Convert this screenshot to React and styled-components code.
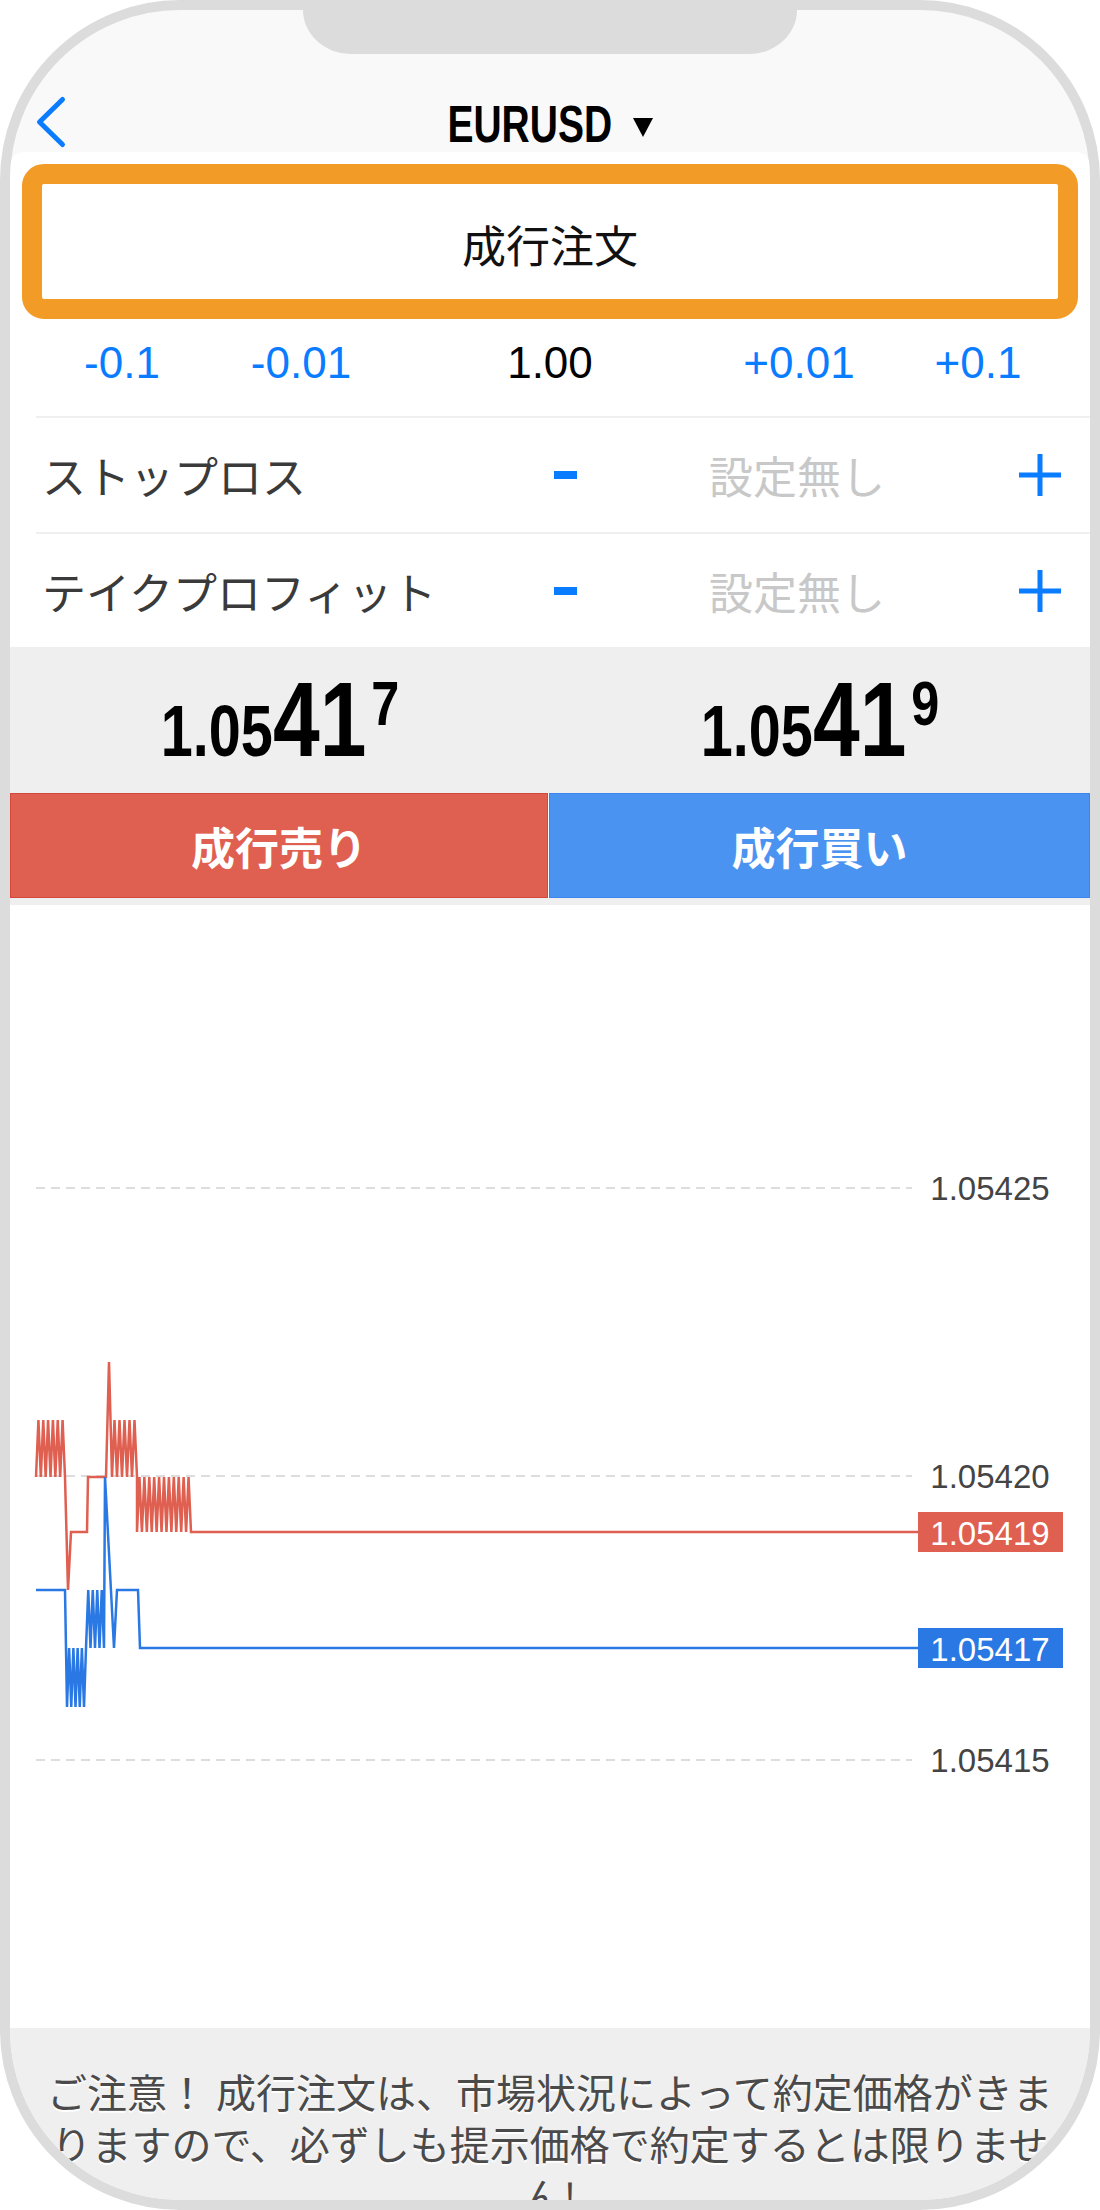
import React from 'react';
import styled, { createGlobalStyle } from 'styled-components';

const BLUE = '#0a7cff';
const SELL = '#df5f50';
const BUY = '#4a93f0';
const JP = '"Noto Sans CJK JP", "Liberation Sans", sans-serif';

const GlobalStyle = createGlobalStyle`
  html, body {
    margin: 0;
    padding: 0;
    background: #fff;
  }
  body {
    font-family: "Liberation Sans", "Noto Sans CJK JP", sans-serif;
  }
  * {
    box-sizing: border-box;
  }
`;

const Phone = styled.div`
  position: relative;
  width: 1100px;
  height: 2210px;
  border: 10px solid #dcdcdc;
  border-radius: 180px;
  background: #f9f9f9;
  overflow: hidden;
  display: flex;
  flex-direction: column;
`;

const Notch = styled.div`
  position: absolute;
  top: 0;
  left: 293px;
  width: 494px;
  height: 44px;
  background: #dcdcdc;
  border-radius: 0 0 48px 48px / 0 0 44px 44px;
`;

const NavBar = styled.header`
  flex: none;
  height: 142px;
  display: grid;
  grid-template-columns: 100px 1fr 100px;
  align-items: end;
  padding-bottom: 2px;
`;

const BackButton = styled.button`
  justify-self: start;
  display: flex;
  margin: 0 0 1px 25px;
  padding: 0;
  border: 0;
  background: none;
`;

const Title = styled.div`
  justify-self: center;
  display: flex;
  align-items: flex-end;
`;

// the app's bold latin face is a condensed one; squeeze liberation to match
const Condensed = styled.span`
  display: inline-block;
  font-size: ${p => p.$size}px;
  font-weight: bold;
  line-height: 1;
  color: #000;
  transform: scaleX(${p => p.$scale});
  margin: 0 ${p => p.$trim}px;
`;

const Caret = styled.svg`
  margin: 0 0 13px 21px;
`;

const Panel = styled.main`
  flex: 1;
  min-height: 0;
  display: flex;
  flex-direction: column;
  background: #fff;
  border-radius: 14px 14px 0 0;
`;

const OrderType = styled.div`
  flex: none;
  height: 155px;
  margin: 12px 12px 0;
  padding-top: 4px;
  border: 20px solid #f29b26;
  border-radius: 22px;
  display: flex;
  align-items: center;
  justify-content: center;
  font-family: ${JP};
  font-size: 44px;
  color: #111;
`;

const LotRow = styled.div`
  flex: none;
  height: 97px;
  padding: 0 22px 9px;
  display: grid;
  grid-template-columns: 180px 178px 1fr 178px 180px;
  align-items: center;
  justify-items: center;
  font-size: 44px;
  line-height: 1;
`;

const LotStep = styled.button`
  padding: 0;
  border: 0;
  background: none;
  font: inherit;
  color: ${BLUE};
`;

const LotValue = styled.span`
  color: #000;
`;

const SettingRow = styled.div`
  flex: none;
  height: ${p => p.$h}px;
  margin-left: 26px;
  padding-left: 6px;
  border-top: 2px solid #efefef;
  display: grid;
  grid-template-columns: 478px 90px 374px 1fr;
  align-items: center;
  font-family: ${JP};
  font-size: 44px;
`;

const SettingLabel = styled.span`
  color: #3a3a3a;
`;

const IconButton = styled.button`
  display: flex;
  padding: 0;
  border: 0;
  background: none;
  justify-self: ${p => p.$align || 'center'};
  margin-right: ${p => p.$mr || 0}px;
`;

const SettingValue = styled.span`
  justify-self: center;
  color: #c8c8c8;
`;

const PriceArea = styled.div`
  flex: none;
  height: 146px;
  padding-top: 20px;
  background: #efefef;
  display: grid;
  grid-template-columns: 1fr 1fr;
  align-items: start;
  justify-items: center;
`;

const Price = styled.div`
  display: flex;
  align-items: baseline;
  font-weight: bold;
  line-height: 1;
  color: #000;
  transform: scaleX(0.8);
`;

const PriceHead = styled.span`
  font-size: 72px;
`;

const PricePips = styled.span`
  font-size: 105px;
`;

const PricePoint = styled.span`
  align-self: flex-start;
  margin: 5px 0 0 6px;
  font-size: 63px;
`;

const TradeButtons = styled.div`
  flex: none;
  height: 105px;
  display: grid;
  grid-template-columns: 538px 1fr;
  gap: 1px;
  border-bottom: 7px solid #efefef;
  box-sizing: content-box;
`;

const TradeButton = styled.button`
  border: 1px solid ${p => p.$edge};
  background: ${p => p.$bg};
  color: #fff;
  font-family: ${JP};
  font-weight: bold;
  font-size: 44px;
`;

const Chart = styled.section`
  flex: 1;
  min-height: 0;
  overflow: hidden;

  svg {
    display: block;
  }
  text {
    font-family: "Liberation Sans", sans-serif;
    font-size: 33px;
  }
`;

const Notice = styled.footer`
  flex: none;
  height: 172px;
  overflow: hidden;
  padding: 37px 25px 0;
  background: #efefef;
  text-align: center;
  font-family: ${JP};
  font-size: 40px;
  line-height: 52px;
  color: #4a4a4a;
  text-shadow: 0 2px 1px #fff;
`;

const Minus = () => (
  <svg width="23" height="8" viewBox="0 0 23 8">
    <rect width="23" height="8" fill={BLUE} />
  </svg>
);

const Plus = () => (
  <svg width="42" height="42" viewBox="0 0 42 42">
    <path d="M0 21h42M21 0v42" stroke={BLUE} strokeWidth="5" />
  </svg>
);

const zig = (x0, x1, yA, yB, n) => {
  const pts = [];
  for (let k = 0; k <= 2 * n; k++) {
    pts.push([x0 + ((x1 - x0) * k) / (2 * n), k % 2 === 0 ? yA : yB]);
  }
  return pts;
};

const askLine = [
  ...zig(26, 55, 572, 515, 6),
  [58, 685], [61, 627], [77, 627], [78, 572], [96, 572], [99, 457], [102, 572],
  ...zig(102, 127, 572, 515, 5),
  ...zig(127, 181, 627, 572, 11),
  [908, 627],
];

const bidLine = [
  [26, 685], [55, 685],
  ...zig(57, 74, 802, 743, 4),
  ...zig(76, 94, 743, 685, 4),
  [95, 572], [104, 743], [107, 685], [128, 685], [130, 743],
  [908, 743],
];

const toPoints = pts => pts.map(p => p.join(',')).join(' ');

const gridLevels = [
  { y: 283, label: '1.05425' },
  { y: 571, label: '1.05420' },
  { y: 855, label: '1.05415' },
];

const quotes = [
  { y: 627, color: SELL, label: '1.05419', points: askLine },
  { y: 743, color: '#2a78e4', label: '1.05417', points: bidLine },
];

const TickChart = () => (
  <Chart>
    <svg width="1080" height="1123" viewBox="0 0 1080 1123">
      {gridLevels.map(g => (
        <g key={g.label}>
          <line x1="26" x2="902" y1={g.y} y2={g.y} stroke="#d2d2d2" strokeWidth="1.5" strokeDasharray="9 6" />
          <text x="980" y={g.y + 12} textAnchor="middle" fill="#444">{g.label}</text>
        </g>
      ))}
      {quotes.map(q => (
        <g key={q.label}>
          <polyline points={toPoints(q.points)} fill="none" stroke={q.color} strokeWidth="2.5" />
          <rect x="908" y={q.y - 20} width="145" height="40" fill={q.color} />
          <text x="980" y={q.y + 13} textAnchor="middle" fill="#fff">{q.label}</text>
        </g>
      ))}
    </svg>
  </Chart>
);

const lotSteps = ['-0.1', '-0.01', null, '+0.01', '+0.1'];

const settings = [
  { label: 'ストップロス', h: 116 },
  { label: 'テイクプロフィット', h: 115 },
];

export default function App() {
  return (
    <>
      <GlobalStyle />
      <Phone>
        <Notch />
        <NavBar>
          <BackButton aria-label="back">
            <svg width="32" height="54" viewBox="0 0 32 54">
              <polyline points="27.5,4.5 4.5,27 27.5,49.5" fill="none" stroke={BLUE} strokeWidth="5" strokeLinecap="round" strokeLinejoin="round" />
            </svg>
          </BackButton>
          <Title>
            <Condensed $size={52} $scale={0.75} $trim={-27}>EURUSD</Condensed>
            <Caret width="20" height="19" viewBox="0 0 20 19">
              <polygon points="0,0 20,0 10,19" fill="#000" />
            </Caret>
          </Title>
        </NavBar>

        <Panel>
          <OrderType>成行注文</OrderType>

          <LotRow>
            {lotSteps.map((s, i) =>
              s ? <LotStep key={i}>{s}</LotStep> : <LotValue key={i}>1.00</LotValue>
            )}
          </LotRow>

          {settings.map(s => (
            <SettingRow key={s.label} $h={s.h}>
              <SettingLabel>{s.label}</SettingLabel>
              <IconButton><Minus /></IconButton>
              <SettingValue>設定無し</SettingValue>
              <IconButton $align="end" $mr={29}><Plus /></IconButton>
            </SettingRow>
          ))}

          <PriceArea>
            <Price>
              <PriceHead>1.05</PriceHead>
              <PricePips>41</PricePips>
              <PricePoint>7</PricePoint>
            </Price>
            <Price>
              <PriceHead>1.05</PriceHead>
              <PricePips>41</PricePips>
              <PricePoint>9</PricePoint>
            </Price>
          </PriceArea>

          <TradeButtons>
            <TradeButton $bg={SELL} $edge="#d4483b">成行売り</TradeButton>
            <TradeButton $bg={BUY} $edge="#3b86ee">成行買い</TradeButton>
          </TradeButtons>

          <TickChart />
        </Panel>

        <Notice>
          ご注意！ 成行注文は、市場状況によって約定価格がきまりますので、必ずしも提示価格で約定するとは限りません!
        </Notice>
      </Phone>
    </>
  );
}
